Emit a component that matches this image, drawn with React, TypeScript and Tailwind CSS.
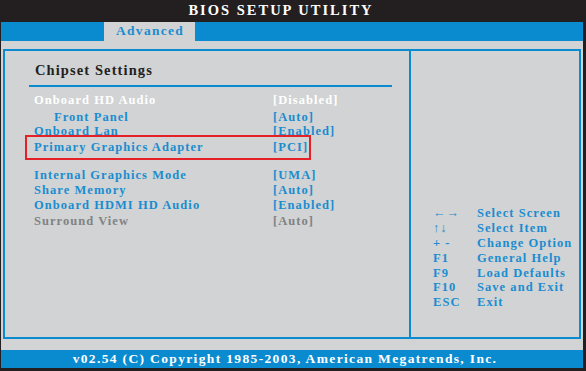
const rows = [
  { label: "Onboard HD Audio", value: "[Disabled]", tone: "text-white", wrap: "mt-[6px]", indent: "" },
  { label: "Front Panel", value: "[Auto]", tone: "text-[#1a8dd0]", wrap: "mt-[3px]", indent: "pl-[25px]" },
  { label: "Onboard Lan", value: "[Enabled]", tone: "text-[#1a8dd0]", wrap: "mt-0", indent: "" },
  { label: "Primary Graphics Adapter", value: "[PCI]", tone: "text-[#1a8dd0]", wrap: "mt-[2px]", indent: "", selected: true },
  { label: "Internal Graphics Mode", value: "[UMA]", tone: "text-[#1a8dd0]", wrap: "mt-[14px]", indent: "" },
  { label: "Share Memory", value: "[Auto]", tone: "text-[#1a8dd0]", wrap: "mt-[1px]", indent: "" },
  { label: "Onboard HDMI HD Audio", value: "[Enabled]", tone: "text-[#1a8dd0]", wrap: "mt-[1px]", indent: "" },
  { label: "Surround View", value: "[Auto]", tone: "text-[#808285]", wrap: "mt-[2px]", indent: "" },
]

const keys = [
  { key: "\u2190\u2192", desc: "Select Screen" },
  { key: "\u2191\u2193", desc: "Select Item" },
  { key: "+ -", desc: "Change Option" },
  { key: "F1", desc: "General Help" },
  { key: "F9", desc: "Load Defaults" },
  { key: "F10", desc: "Save and Exit" },
  { key: "ESC", desc: "Exit" },
]

export default function App() {
  return (
    <div
      className="w-[586px] h-[371px] bg-[#231f20] flex flex-col pl-[1px] pr-[3px] pb-[3px] font-bold overflow-hidden"
      style={{ fontFamily: '"Liberation Serif", "Times New Roman", serif' }}
    >
      <div className="h-[22px] flex items-center justify-center text-white text-[14.5px] tracking-[2px] pr-[22px]">
        BIOS SETUP UTILITY
      </div>

      <div className="h-[19px] bg-[#0a8bd0] flex">
        <div className="ml-[103px] w-[91px] bg-[#d1d3d4] flex items-center pl-[12px] text-[#1a8dd0] text-[13.5px] tracking-[1.3px]">
          Advanced
        </div>
      </div>

      <div className="flex-1 bg-[#d1d3d4] pt-[8px] pb-[11px] pl-[2px] pr-[2px] flex">
        <div className="flex-1 border-2 border-[#0a8bd0] flex">
          <div className="w-[406px] border-r-2 border-[#0a8bd0] pl-[24px] pr-[17px] pt-[11px]">
            <div className="text-[#231f20] text-[14.5px] tracking-[1.1px] leading-[16px] pl-[6px]">
              Chipset Settings
            </div>
            <div className="mt-[7px] h-[2px] bg-[#0a8bd0]" />

            {rows.map((r, i) => (
              <div key={i} className={`relative flex text-[12.5px] tracking-[1.05px] leading-[14px] ${r.wrap} ${r.tone}`}>
                <div className={`w-[244px] pl-[5px] ${r.indent}`}>{r.label}</div>
                <div>{r.value}</div>
                {r.selected && (
                  <div className="absolute left-[-4px] top-[-5px] w-[286px] h-[25px] border-2 border-[#e42127]" />
                )}
              </div>
            ))}
          </div>

          <div className="flex-1 flex flex-col justify-end pb-[27px] pl-[22px] text-[#1a8dd0] text-[12.5px] tracking-[1.05px]">
            {keys.map((k) => (
              <div key={k.desc} className="flex leading-[14.8px]">
                <div className="w-[44px]">{k.key}</div>
                <div>{k.desc}</div>
              </div>
            ))}
          </div>
        </div>
      </div>

      <div className="h-[18px] bg-[#0a8bd0] flex items-center justify-center text-white text-[13.5px] tracking-[1.35px] pr-[14px]">
        v02.54 (C) Copyright 1985-2003, American Megatrends, Inc.
      </div>
    </div>
  )
}
